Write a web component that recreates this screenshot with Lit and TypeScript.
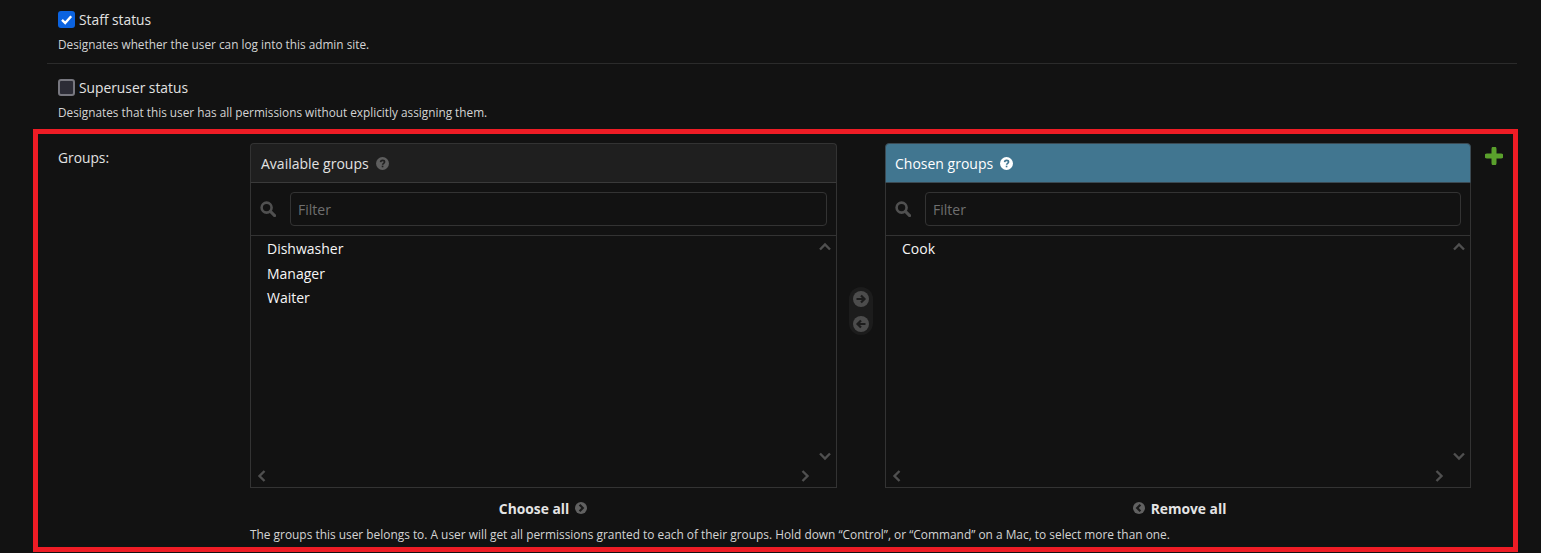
import { LitElement, html, css, svg } from "lit";
import { customElement } from "lit/decorators.js";

const help = (c: string, hole: string) => svg`<svg class="help" viewBox="0 0 12 12" width="13" height="13"><circle cx="6" cy="6" r="6" fill="${c}"/><path d="M4.2 4.7c.1-1.1.9-1.6 1.9-1.6s1.8.6 1.8 1.5c0 1.3-1.7 1.2-1.8 2.6" fill="none" stroke="${hole}" stroke-width="1.5"/><rect x="5.3" y="8" width="1.5" height="1.5" fill="${hole}"/></svg>`;
const search = svg`<svg class="search" viewBox="0 0 16 16" width="16" height="16"><circle cx="6.6" cy="6.6" r="5" fill="none" stroke="#505050" stroke-width="2.6"/><path d="M10.4 10.4l4.2 4.2" stroke="#505050" stroke-width="3" stroke-linecap="round"/></svg>`;
const chev = (d: string, cls: string) => svg`<svg class="chev ${cls}" viewBox="0 0 12 12" width="12" height="12"><path d="${d}" fill="none" stroke="#4f4f4f" stroke-width="2.4"/></svg>`;
const circ = (dir: "r" | "l", fill: string, ink: string) => svg`<svg viewBox="0 0 16 16" width="16" height="16"><circle cx="8" cy="8" r="8" fill="${fill}"/><path d="${dir === "r" ? "M3.5 8H11M8 4.5L11.5 8 8 11.5" : "M12.5 8H5M8 4.5L4.5 8 8 11.5"}" fill="none" stroke="${ink}" stroke-width="2.2"/></svg>`;
const small = (dir: "r" | "l") => svg`<svg viewBox="0 0 12 12" width="12" height="12"><circle cx="6" cy="6" r="6" fill="#616161"/><path d="${dir === "r" ? "M4.6 2.8L7.8 6 4.6 9.2" : "M7.4 2.8L4.2 6 7.4 9.2"}" fill="none" stroke="#1a1a1a" stroke-width="2.2"/></svg>`;

@customElement("app-root")
export class AppRoot extends LitElement {
  static styles = css`
    :host { display: block; height: 553px; overflow: hidden; background: #121212; color: #e2e2e2; font-family: "Open Sans", "Noto Sans", sans-serif; font-size: 13.8px; }
    * { box-sizing: border-box; }
    .fieldset { padding: 0 24px 0 47px; }
    .row { padding: 11px 0 0 11px; border-bottom: 1px solid #2b2b2b; height: 53px; }
    .row.first { height: 64px; }
    .row.plain { border-bottom: 0; height: 65px; padding-top: 15px; }
    .check { display: flex; align-items: center; gap: 4px; height: 17px; }
    .box { width: 17px; height: 17px; border-radius: 3px; flex: none; display: block; }
    .box.on { background: #0b63e0; }
    .box.off { background: #2c2c36; border: 2px solid #77777f; }
    .hint { font-size: 11.8px; color: #d4d4d4; margin-top: 8px; line-height: 16px; }
    .groups { border: 5px solid #ee1c25; margin-left: -14px; margin-right: -1px; height: 423px; padding: 9px 0 0 20px; display: flex; }
    .label { width: 192px; flex: none; padding-top: 5px; line-height: 20px; }
    .main { display: flex; flex-direction: column; }
    .sel { display: flex; }
    .col { width: 587px; }
    .col.right { width: 586px; }
    .box2 { position: relative; border: 1px solid #333; border-top: 0; height: 305px; }
    .head { height: 40px; display: flex; align-items: center; gap: 7px; padding: 0 10px; background: #1f1f1f; border: 1px solid #333; border-bottom: 1px solid #3a3a3a; border-radius: 4px 4px 0 0; font-size: 14px; }
    .head.blue { background: #417690; color: #fff; border-color: #3b4a53; padding-left: 9px; }
    .filter { display: flex; align-items: center; gap: 14px; padding: 9px; height: 53px; border-bottom: 1px solid #333; }
    .filter .search { flex: none; }
    .input { flex: 1; height: 34px; border: 1px solid #333; border-radius: 4px; padding: 0 7px; display: flex; align-items: center; color: #6f6f6f; font-size: 14px; }
    .list { padding: 1px 16px; height: 251px; color: #f6f6f6; font-size: 14px; line-height: 24.5px; }
    .chev { position: absolute; }
    .up { right: 5px; top: 58px; }
    .down { right: 5px; bottom: 25px; }
    .left { left: 5px; bottom: 5px; }
    .rgt { right: 25px; bottom: 5px; }
    .mid { width: 48px; flex: none; display: flex; justify-content: center; padding-top: 144px; }
    .pill { width: 24px; height: 48px; border-radius: 12px; background: #1c1c1c; display: flex; flex-direction: column; align-items: center; justify-content: center; gap: 9px; }
    .all { display: flex; justify-content: center; align-items: center; gap: 6px; height: 40px; font-weight: 700; font-size: 13.8px; color: #e4e4e4; }
    .col:not(.right) .all { padding-right: 1px; }
    .col.right .all { padding-left: 3px; }
    .foot { font-size: 11.9px; color: #d4d4d4; line-height: 16px; margin-top: -2px; }
    .plus { margin: 4px 0 0 14px; flex: none; display: block; }
  `;

  private selector(title: string, items: string[], blue: boolean) {
    return html`<div class="col ${blue ? "right" : ""}">
      <div class="head ${blue ? "blue" : ""}"><span>${title}</span>${blue ? help("#fff", "#417690") : help("#5e5e5e", "#1f1f1f")}</div>
      <div class="box2">
        <div class="filter">${search}<div class="input">Filter</div></div>
        <div class="list">${items.map((i) => html`<div>${i}</div>`)}</div>
        ${chev("M1 8.5L6 3.5l5 5", "up")}${chev("M1 3.5l5 5 5-5", "down")}${chev("M8.5 1L3.5 6l5 5", "left")}${chev("M3.5 1l5 5-5 5", "rgt")}
      </div>
      <div class="all">
        ${blue ? small("l") : ""}<span>${blue ? "Remove all" : "Choose all"}</span>${blue ? "" : small("r")}
      </div>
    </div>`;
  }

  render() {
    return html`<div class="fieldset">
      <div class="row first">
        <div class="check"><svg class="box on" viewBox="0 0 17 17"><path d="M4 8.8l3.2 3.2L13.2 5.2" fill="none" stroke="#fff" stroke-width="2.4"/></svg><span>Staff status</span></div>
        <div class="hint">Designates whether the user can log into this admin site.</div>
      </div>
      <div class="row plain">
        <div class="check"><span class="box off"></span><span>Superuser status</span></div>
        <div class="hint">Designates that this user has all permissions without explicitly assigning them.</div>
      </div>
      <div class="groups">
        <div class="label">Groups:</div>
        <div class="main">
          <div class="sel">
            ${this.selector("Available groups", ["Dishwasher", "Manager", "Waiter"], false)}
            <div class="mid"><div class="pill">${circ("r", "#4c4c4c", "#1c1c1c")}${circ("l", "#4c4c4c", "#1c1c1c")}</div></div>
            ${this.selector("Chosen groups", ["Cook"], true)}
          </div>
          <div class="foot">The groups this user belongs to. A user will get all permissions granted to each of their groups. Hold down “Control”, or “Command” on a Mac, to select more than one.</div>
        </div>
        <svg class="plus" viewBox="0 0 18 18" width="18" height="18"><path d="M9 2v14M2 9h14" stroke="#5aa02c" stroke-width="5" stroke-linecap="round"/></svg>
      </div>
    </div>`;
  }
}
